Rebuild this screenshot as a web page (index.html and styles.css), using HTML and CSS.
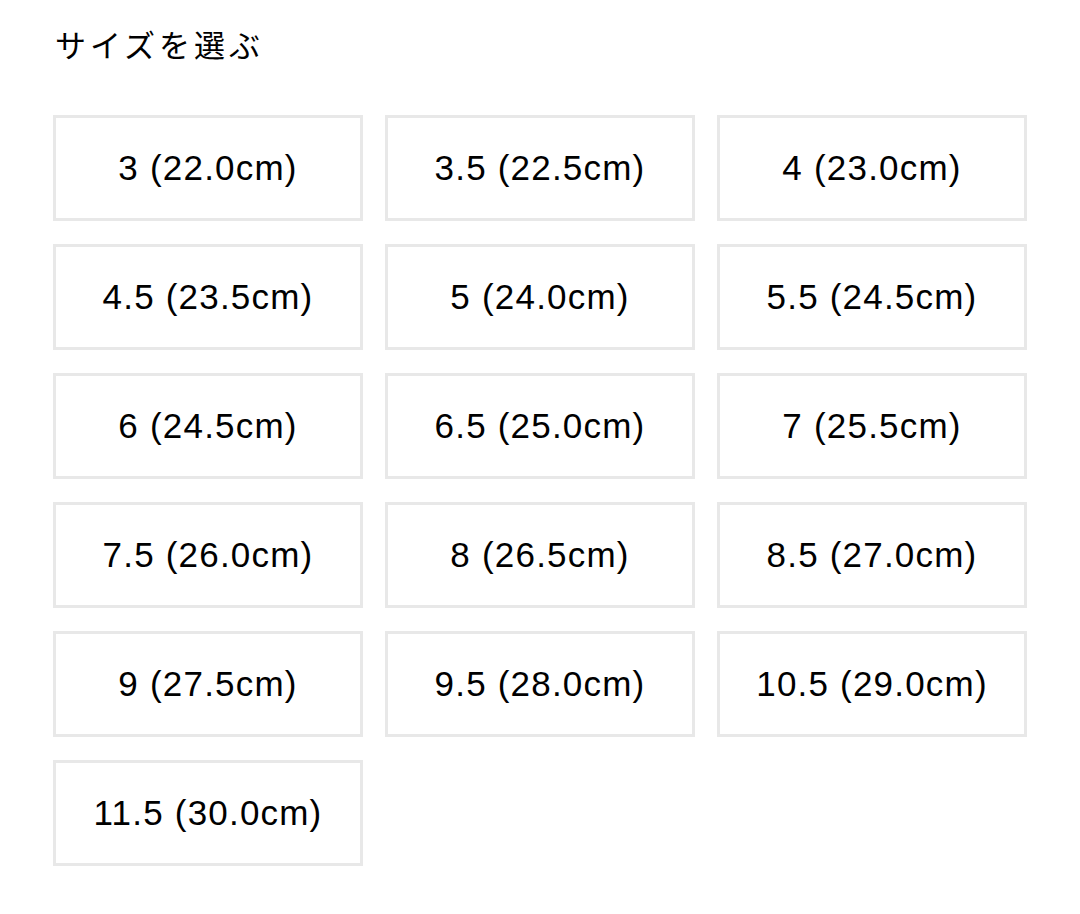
FILE: index.html
```html
<!DOCTYPE html>
<html lang="ja">
<head>
    <meta charset="UTF-8">
    <meta name="viewport" content="width=device-width, initial-scale=1.0">
    <title>サイズを選ぶ</title>

    <link rel="stylesheet" href="styles.css">
</head>

<body>
    <div class="size-picker">
        <h2 class="title">サイズを選ぶ</h2>

        <div class="size-grid">
            <button class="size-option" type="button">3 (22.0cm)</button>
            <button class="size-option" type="button">3.5 (22.5cm)</button>
            <button class="size-option" type="button">4 (23.0cm)</button>
            <button class="size-option" type="button">4.5 (23.5cm)</button>
            <button class="size-option" type="button">5 (24.0cm)</button>
            <button class="size-option" type="button">5.5 (24.5cm)</button>
            <button class="size-option" type="button">6 (24.5cm)</button>
            <button class="size-option" type="button">6.5 (25.0cm)</button>
            <button class="size-option" type="button">7 (25.5cm)</button>
            <button class="size-option" type="button">7.5 (26.0cm)</button>
            <button class="size-option" type="button">8 (26.5cm)</button>
            <button class="size-option" type="button">8.5 (27.0cm)</button>
            <button class="size-option" type="button">9 (27.5cm)</button>
            <button class="size-option" type="button">9.5 (28.0cm)</button>
            <button class="size-option" type="button">10.5 (29.0cm)</button>
            <button class="size-option" type="button">11.5 (30.0cm)</button>
        </div>
    </div>
</body>
</html>
```

FILE: styles.css
```css
body {
    margin: 0;
    background-color: #FFFFFF;
    color: #000000;
    font-family: 'Liberation Sans', 'Noto Sans CJK JP', sans-serif;
}

.size-picker {
    padding: 22px 53px 40px;
}

.title {
    margin: 0 0 50px 2px;
    font-family: 'Noto Sans CJK JP', sans-serif;
    font-size: 31px;
    font-weight: 400;
    letter-spacing: 4px;
    line-height: 43px;
}

.size-grid {
    display: grid;
    grid-template-columns: repeat(3, 310px);
    column-gap: 22px;
    row-gap: 23px;
}

.size-option {
    height: 106px;
    box-sizing: border-box;
    border: 3px solid #E8E8E8;
    background-color: #FFFFFF;
    color: #000000;
    font-family: 'Liberation Sans', sans-serif;
    font-size: 35px;
    letter-spacing: 1.2px;
    padding: 0;
    cursor: pointer;
}
```
